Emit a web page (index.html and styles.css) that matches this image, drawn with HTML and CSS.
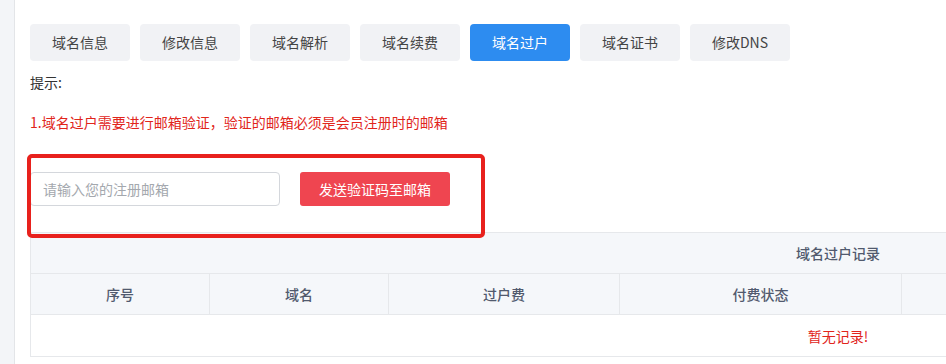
FILE: index.html
```html
<!DOCTYPE html>
<html lang="zh-CN">
<head>
    <meta charset="UTF-8">
    <meta name="viewport" content="width=device-width, initial-scale=1.0">
    <title>域名过户</title>
    <link rel="stylesheet" href="styles.css">
</head>
<body>
    <div class="layout">
        <div class="side"></div>
        <div class="main">
            <div class="tabs">
                <a class="tab">域名信息</a>
                <a class="tab">修改信息</a>
                <a class="tab">域名解析</a>
                <a class="tab">域名续费</a>
                <a class="tab active">域名过户</a>
                <a class="tab">域名证书</a>
                <a class="tab">修改DNS</a>
            </div>
            <p class="tip">提示:</p>
            <p class="warn">1.域名过户需要进行邮箱验证，验证的邮箱必须是会员注册时的邮箱</p>
            <div class="verify">
                <input type="text" class="email-input" placeholder="请输入您的注册邮箱">
                <button class="send-btn">发送验证码至邮箱</button>
                <div class="mark"></div>
            </div>
            <div class="record">
                <table>
                    <colgroup>
                        <col class="c-no">
                        <col class="c-domain">
                        <col class="c-fee">
                        <col class="c-pay">
                        <col class="c-rest">
                    </colgroup>
                    <thead>
                        <tr>
                            <th colspan="5" class="title">域名过户记录</th>
                        </tr>
                        <tr>
                            <th>序号</th>
                            <th>域名</th>
                            <th>过户费</th>
                            <th>付费状态</th>
                            <th></th>
                        </tr>
                    </thead>
                    <tbody>
                        <tr>
                            <td colspan="5" class="empty">暂无记录!</td>
                        </tr>
                    </tbody>
                </table>
            </div>
        </div>
    </div>
</body>
</html>
```

FILE: styles.css
```css
html, body {
    margin: 0;
    padding: 0;
    overflow: hidden;
}
body {
    font-family: "Microsoft YaHei", "Noto Sans CJK SC", "Noto Sans", sans-serif;
    font-size: 14px;
    color: #333;
    background: #fff;
}
.layout {
    display: flex;
    min-height: 364px;
}
.side {
    flex: 0 0 14px;
    background: #f3f5f8;
    border-right: 1px solid #e3e5e8;
}
.main {
    flex: 1;
    min-width: 0;
    padding: 24px 0 0 15px;
}
.tabs {
    display: flex;
    gap: 10px;
}
.tab {
    width: 100px;
    height: 37px;
    line-height: 37px;
    text-align: center;
    background: #f1f2f5;
    border-radius: 4px;
    color: #444;
    cursor: pointer;
}
.tab.active {
    background: #2d8cf0;
    color: #fff;
}
.tip {
    margin: 11px 0 0;
    line-height: 20px;
    font-size: 14px;
    color: #333;
}
.warn {
    margin: 20px 0 0;
    line-height: 20px;
    font-size: 14px;
    color: #e1251b;
}
.verify {
    position: relative;
    display: flex;
    gap: 20px;
    margin-top: 40px;
}
.email-input {
    width: 250px;
    height: 34px;
    box-sizing: border-box;
    border: 1px solid #d4d7dc;
    border-radius: 4px;
    padding: 0 12px;
    font-family: inherit;
    font-size: 14px;
    outline: none;
}
.email-input::placeholder {
    color: #a4a8ae;
}
.send-btn {
    width: 150px;
    height: 34px;
    border: none;
    border-radius: 3px;
    background: #ef4550;
    color: #fff;
    font-family: inherit;
    font-size: 14px;
    cursor: pointer;
}
.mark {
    position: absolute;
    left: -3px;
    top: -18px;
    width: 458px;
    height: 84px;
    box-sizing: border-box;
    border: 4px solid #e8211d;
    border-radius: 5px;
    pointer-events: none;
}
.record {
    margin-top: 26px;
}
table {
    width: 1616px;
    border-collapse: collapse;
    table-layout: fixed;
}
.c-no, .c-domain {
    width: 179px;
}
.c-fee {
    width: 231px;
}
.c-pay {
    width: 282px;
}
th, td {
    border: 1px solid #e6e8eb;
    height: 40px;
    padding: 0;
    text-align: center;
    font-size: 14px;
}
th {
    background: #f5f7fa;
    color: #515a6e;
    font-weight: 500;
}
.empty {
    height: 41px;
    color: #e1251b;
}
```
